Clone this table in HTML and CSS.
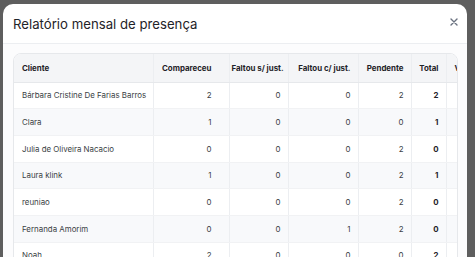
FILE: index.html
```html
<!DOCTYPE html>
<html lang="pt">
<head>
<meta charset="utf-8">
<link rel="stylesheet" href="styles.css">
</head>
<body>
<div class="modal">
  <div class="modal-header">
    <h2 class="modal-title">Relatório mensal de presença</h2>
    <button class="close" aria-label="Fechar">
      <svg width="8" height="8" viewBox="0 0 8 8"><path d="M1 1L7 7M7 1L1 7" stroke="#6b7280" stroke-width="1.4" stroke-linecap="round"/></svg>
    </button>
  </div>
  <div class="modal-body">
    <div class="table-wrap">
      <table class="report">
        <colgroup>
          <col class="c-name"><col class="c-comp"><col class="c-fsj"><col class="c-fcj"><col class="c-pend"><col class="c-total"><col class="c-v">
        </colgroup>
        <thead>
          <tr><th class="left">Cliente</th><th class="comp">Compareceu</th><th>Faltou s/ just.</th><th>Faltou c/ just.</th><th>Pendente</th><th>Total</th><th class="left">V</th></tr>
        </thead>
        <tbody>
          <tr><td class="left">Bárbara Cristine De Farias Barros</td><td class="comp">2</td><td>0</td><td>0</td><td>2</td><td class="b">2</td><td></td></tr>
          <tr><td class="left">Clara</td><td class="comp">1</td><td>0</td><td>0</td><td>0</td><td class="b">1</td><td></td></tr>
          <tr><td class="left">Julia de Oliveira Nacacio</td><td class="comp">0</td><td>0</td><td>0</td><td>2</td><td class="b">0</td><td></td></tr>
          <tr><td class="left">Laura klink</td><td class="comp">1</td><td>0</td><td>0</td><td>2</td><td class="b">1</td><td></td></tr>
          <tr><td class="left">reuniao</td><td class="comp">0</td><td>0</td><td>0</td><td>2</td><td class="b">0</td><td></td></tr>
          <tr><td class="left">Fernanda Amorim</td><td class="comp">0</td><td>0</td><td>1</td><td>2</td><td class="b">0</td><td></td></tr>
          <tr><td class="left">Noah</td><td class="comp">2</td><td>0</td><td>0</td><td>0</td><td class="b">2</td><td></td></tr>
        </tbody>
      </table>
    </div>
  </div>
</div>
</body>
</html>
```
FILE: styles.css
```css
* { box-sizing: border-box; }
html, body { margin: 0; height: 100%; overflow: hidden; }
body {
  background: #5e5e5e;
  font-family: Inter, "Noto Sans", sans-serif;
  padding: 4px 0 0 3px;
}
.modal {
  width: 464px;
  height: 300px;
  background: #fff;
  border-radius: 10px;
  overflow: hidden;
}
.modal-header {
  height: 40px;
  display: flex;
  align-items: center;
  justify-content: space-between;
  padding: 0 5px 0 10px;
  border-bottom: 1px solid #eceef1;
}
.modal-title {
  margin: 0;
  font-size: 13.2px;
  font-weight: 400;
  color: #1f2328;
  margin-top: 1px;
}
.close {
  border: 0;
  background: none;
  padding: 4px;
  display: flex;
  margin-top: -4px;
}
.modal-body {
  background: #fcfcfd;
  padding: 9px 9px 0 10px;
}
.table-wrap {
  border: 1px solid #e6e8eb;
  border-radius: 8px;
  overflow: hidden;
  background: #fff;
}
.report {
  border-collapse: collapse;
  table-layout: fixed;
  width: 480px;
  font-size: 7.9px;
  color: #3b3f45;
}
.c-name { width: 139px; }
.c-comp { width: 76px; }
.c-fsj { width: 59px; }
.c-fcj { width: 70px; }
.c-pend { width: 53px; }
.c-total { width: 35px; }
.c-v { width: 48px; }
th, td {
  text-align: right;
  padding: 0 7px 0 8px;
  border-left: 1px solid #eceef1;
  white-space: nowrap;
  overflow: hidden;
}
th:first-child, td:first-child { border-left: 0; }
th {
  height: 28px;
  padding-left: 2px;
  background: #f4f5f7;
  font-weight: 700;
  color: #1f2328;
  border-bottom: 1px solid #e6e8eb;
}
th.left { padding-left: 8px; }
th.comp, td.comp { padding-right: 17px; }
td { height: 26.7px; border-bottom: 1px solid #f1f2f4; }
.left { text-align: left; }
tbody tr:nth-child(even) td { background: #f8f9fb; }
td.b { font-weight: 700; color: #1f2328; }
```
